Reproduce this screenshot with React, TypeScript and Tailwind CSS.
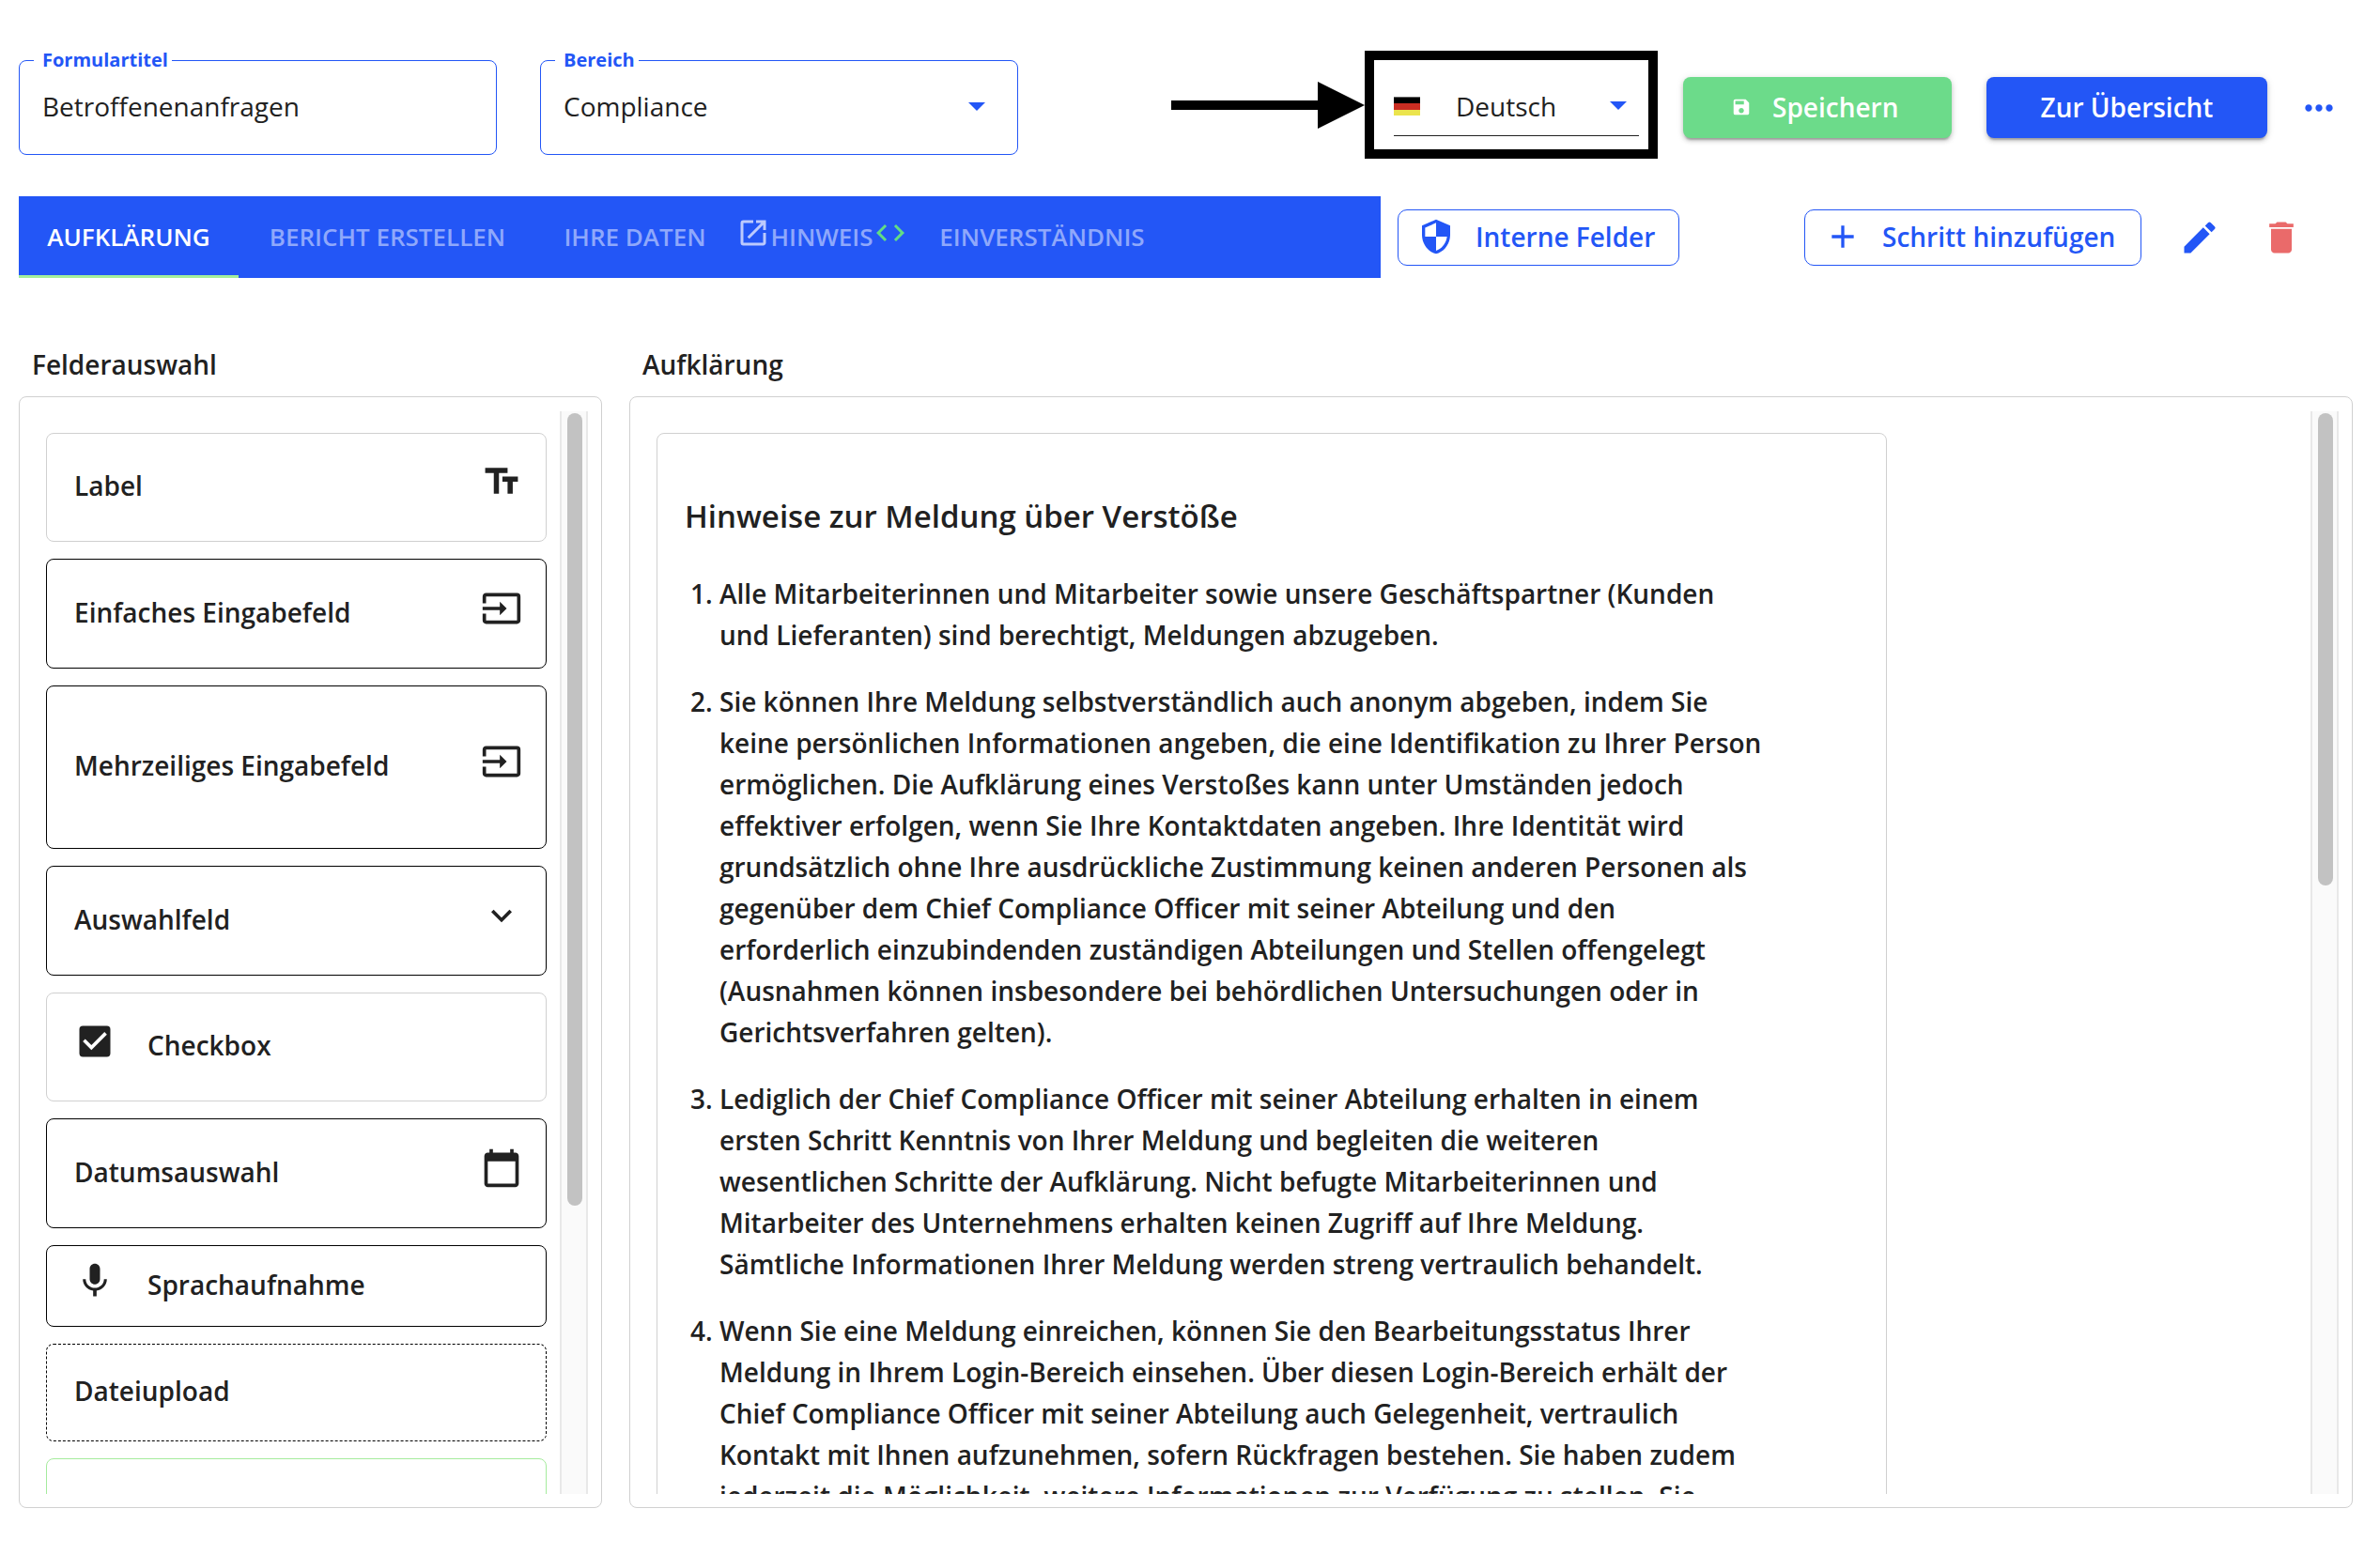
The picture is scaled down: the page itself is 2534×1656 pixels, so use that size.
import React, { useState } from "react";
import clsx from "clsx";
import {
  MdAdd,
  MdCalendarToday,
  MdCheckBox,
  MdCode,
  MdDelete,
  MdEdit,
  MdExpandMore,
  MdInput,
  MdMic,
  MdMoreHoriz,
  MdOpenInNew,
  MdSave,
  MdSecurity,
  MdTextFields,
} from "react-icons/md";

function Caret({ className }: { className?: string }) {
  return (
    <svg viewBox="0 0 18 9" className={clsx("pointer-events-none h-[9px] w-[18px] fill-[#2356f6]", className)}>
      <path d="M0 0h18L9 9z" />
    </svg>
  );
}

function GermanFlag() {
  return (
    <svg viewBox="0 0 28 20" className="h-5 w-7 shrink-0">
      <rect width="28" height="7" fill="#000000" />
      <rect width="28" height="1" fill="#666666" />
      <rect y="7" width="28" height="7" fill="#c92d22" />
      <rect y="14" width="28" height="6" fill="#ebe44d" />
    </svg>
  );
}

function OutlinedField({ id, label, children }: { id: string; label: string; children: React.ReactNode }) {
  return (
    <fieldset className="w-[509px] rounded-lg border border-[#2356f6] px-[15px] pb-3">
      <legend className="h-6 pl-[9px] pr-1 text-[20px] leading-6 font-bold text-[#2356f6]">
        <label htmlFor={id}>{label}</label>
      </legend>
      <div className="relative flex h-[76px] items-center pr-[19px] pb-0.5 pl-[9px]">{children}</div>
    </fieldset>
  );
}

function Tabs() {
  const [active, setActive] = useState("AUFKLÄRUNG");
  const tabs = [
    { name: "AUFKLÄRUNG", width: "w-[234px]" },
    { name: "BERICHT ERSTELLEN", width: "w-[317px]" },
    { name: "IHRE DATEN", width: "w-[210px]" },
    { name: "HINWEIS", width: "w-[188px]" },
    { name: "EINVERSTÄNDNIS", width: "w-[281px]" },
  ];
  return (
    <div role="tablist" className="flex h-[87px] min-w-0 flex-1 bg-[#2356f6]">
      {tabs.map(({ name, width }) => (
        <button
          key={name}
          role="tab"
          aria-selected={active === name}
          onClick={() => setActive(name)}
          className={clsx(
            "flex items-center justify-center border-b-3 pt-0.5 text-[26px] font-semibold whitespace-nowrap",
            width,
            active === name ? "border-[#a5ee9c] text-white" : "border-transparent text-[#8fa8fb]",
          )}
        >
          {name === "HINWEIS" ? (
            <>
              <MdOpenInNew className="mb-2 size-9 text-[#bccafd]" />
              {name}
              <MdCode className="mb-2 size-9 text-[#62dd84]" />
            </>
          ) : (
            name
          )}
        </button>
      ))}
    </div>
  );
}

function Panel({ thumb, children }: { thumb: string; children: React.ReactNode }) {
  return (
    <div className="flex min-h-0 flex-1 gap-3.5 rounded-lg border border-[#d0d0d0] pt-[15px] pr-3.5 pb-3.5 pl-7">
      <div className="min-w-0 flex-1 overflow-hidden pt-[23px]">{children}</div>
      <div className="w-[30px] border-x-2 border-[#e8e8e8] bg-[#fafafa] px-1.5 pt-0.5">
        <div className={clsx("w-4 rounded-full bg-[#c2c2c2]", thumb)} />
      </div>
    </div>
  );
}

const fields = [
  { label: "Label", trailing: MdTextFields, look: "h-[116px] border-[#d0d0d0]" },
  { label: "Einfaches Eingabefeld", trailing: MdInput, look: "h-[117px] border-black" },
  { label: "Mehrzeiliges Eingabefeld", trailing: MdInput, look: "h-[174px] border-black" },
  { label: "Auswahlfeld", trailing: MdExpandMore, look: "h-[117px] border-black" },
  { label: "Checkbox", leading: MdCheckBox, look: "h-[116px] border-[#d0d0d0]" },
  { label: "Datumsauswahl", trailing: MdCalendarToday, look: "h-[117px] border-black" },
  { label: "Sprachaufnahme", leading: MdMic, look: "h-[87px] border-black" },
  { label: "Dateiupload", look: "h-[104px] border-dashed border-black" },
  { label: "", look: "h-[117px] border-[#a5eb9d]" },
];

function FieldCard({ label, leading: Leading, trailing: Trailing, look }: (typeof fields)[number]) {
  return (
    <button
      className={clsx(
        "flex w-full shrink-0 items-center rounded-lg border pr-[25px] pb-1 pl-[29px] text-left text-[28px] font-semibold",
        look,
      )}
    >
      {Leading && <Leading className="mr-[34px] mb-2 size-11" />}
      <span className="flex-1">{label}</span>
      {Trailing && <Trailing className="mb-2 size-11" />}
    </button>
  );
}

const notes = [
  [
    "Alle Mitarbeiterinnen und Mitarbeiter sowie unsere Geschäftspartner (Kunden",
    "und Lieferanten) sind berechtigt, Meldungen abzugeben.",
  ],
  [
    "Sie können Ihre Meldung selbstverständlich auch anonym abgeben, indem Sie",
    "keine persönlichen Informationen angeben, die eine Identifikation zu Ihrer Person",
    "ermöglichen. Die Aufklärung eines Verstoßes kann unter Umständen jedoch",
    "effektiver erfolgen, wenn Sie Ihre Kontaktdaten angeben. Ihre Identität wird",
    "grundsätzlich ohne Ihre ausdrückliche Zustimmung keinen anderen Personen als",
    "gegenüber dem Chief Compliance Officer mit seiner Abteilung und den",
    "erforderlich einzubindenden zuständigen Abteilungen und Stellen offengelegt",
    "(Ausnahmen können insbesondere bei behördlichen Untersuchungen oder in",
    "Gerichtsverfahren gelten).",
  ],
  [
    "Lediglich der Chief Compliance Officer mit seiner Abteilung erhalten in einem",
    "ersten Schritt Kenntnis von Ihrer Meldung und begleiten die weiteren",
    "wesentlichen Schritte der Aufklärung. Nicht befugte Mitarbeiterinnen und",
    "Mitarbeiter des Unternehmens erhalten keinen Zugriff auf Ihre Meldung.",
    "Sämtliche Informationen Ihrer Meldung werden streng vertraulich behandelt.",
  ],
  [
    "Wenn Sie eine Meldung einreichen, können Sie den Bearbeitungsstatus Ihrer",
    "Meldung in Ihrem Login-Bereich einsehen. Über diesen Login-Bereich erhält der",
    "Chief Compliance Officer mit seiner Abteilung auch Gelegenheit, vertraulich",
    "Kontakt mit Ihnen aufzunehmen, sofern Rückfragen bestehen. Sie haben zudem",
    "jederzeit die Möglichkeit, weitere Informationen zur Verfügung zu stellen. Sie",
  ],
];

const raised =
  "shadow-[0_4px_2px_-2px_rgba(0,0,0,0.22),0_3px_5px_0_rgba(0,0,0,0.18),0_1px_9px_0_rgba(0,0,0,0.1)]";

export default function App() {
  return (
    <div className="flex h-screen flex-col overflow-hidden bg-white pb-[50px] font-['Open_Sans',sans-serif] text-[#212121]">
      <header className="flex items-start pt-[52px] pr-[43px] pl-5">
        <div className="flex gap-[46px]">
          <OutlinedField id="title" label="Formulartitel">
            <input
              id="title"
              defaultValue="Betroffenenanfragen"
              className="w-full bg-transparent text-[28px] outline-none"
            />
          </OutlinedField>
          <OutlinedField id="area" label="Bereich">
            <select id="area" className="w-full appearance-none bg-transparent text-[28px] outline-none">
              <option>Compliance</option>
            </select>
            <Caret className="absolute right-[19px]" />
          </OutlinedField>
        </div>

        <div className="mt-0.5 ml-auto flex items-center">
          <svg viewBox="0 0 206 50" className="h-[50px] w-[206px]">
            <path d="M0 20h156V0l50 25-50 25V30H0z" />
          </svg>
          <div className="h-[115px] w-[312px] border-10 border-black pt-[17px] pr-2.5 pl-[21px]">
            <div className="relative flex h-16 items-center border-b border-[#212121]">
              <GermanFlag />
              <select
                aria-label="Sprache"
                className="ml-[38px] flex-1 appearance-none bg-transparent text-[28px] outline-none"
              >
                <option>Deutsch</option>
              </select>
              <Caret className="absolute right-[13px]" />
            </div>
          </div>
          <div className="flex items-center pt-1.5">
            <button
              className={clsx(
                "ml-[27px] flex h-[65px] w-[286px] items-center gap-[22px] rounded-lg bg-[#6cdb8a] pb-0.5 pl-[51px] text-[28px] font-semibold text-white",
                raised,
              )}
            >
              <MdSave className="size-[22px]" />
              Speichern
            </button>
            <button
              className={clsx(
                "ml-[37px] h-[65px] w-[299px] rounded-lg bg-[#2356f6] pb-0.5 text-[28px] font-semibold text-white",
                raised,
              )}
            >
              Zur Übersicht
            </button>
            <button aria-label="Mehr" className="ml-[33px] text-[#2356f6]">
              <MdMoreHoriz className="size-11" />
            </button>
          </div>
        </div>
      </header>

      <nav className="mt-10 flex items-center pr-[83px] pl-5">
        <Tabs />
        <button className="ml-[18px] flex h-[60px] w-[300px] items-center gap-[22px] rounded-[10px] border border-[#2356f6] pb-0.5 pl-5 text-[28px] font-semibold text-[#2356f6]">
          <MdSecurity className="size-10" />
          Interne Felder
        </button>
        <button className="ml-[133px] flex h-[60px] w-[359px] items-center gap-[22px] rounded-[10px] border border-[#2356f6] pb-0.5 pl-5 text-[28px] font-semibold text-[#2356f6]">
          <MdAdd className="size-10" />
          Schritt hinzufügen
        </button>
        <button aria-label="Bearbeiten" className="ml-10 text-[#2356f6]">
          <MdEdit className="size-11" />
        </button>
        <button aria-label="Löschen" className="ml-[43px] text-[#ea6a6a]">
          <MdDelete className="size-11" />
        </button>
      </nav>

      <main className="mt-[74px] flex min-h-0 flex-1 gap-[29px] pr-[29px] pl-5">
        <section className="flex w-[621px] flex-col">
          <h2 className="mb-4 pl-3.5 text-[28px] leading-9 font-semibold">Felderauswahl</h2>
          <Panel thumb="h-[844px]">
            <div className="flex flex-col gap-[18px]">
              {fields.map((field) => (
                <FieldCard key={field.label} {...field} />
              ))}
            </div>
          </Panel>
        </section>

        <section className="flex min-w-0 flex-1 flex-col">
          <h2 className="mb-4 pl-3.5 text-[28px] leading-9 font-semibold">Aufklärung</h2>
          <Panel thumb="h-[503px]">
            <article className="w-3/4 rounded-lg border border-[#d0d0d0] px-[29px] pt-16">
              <h3 className="text-[33px] leading-12 font-semibold">Hinweise zur Meldung über Verstöße</h3>
              <ol className="mt-9 list-decimal space-y-[27px] pl-[37px] text-[28px] leading-11 font-semibold whitespace-nowrap">
                {notes.map((lines) => (
                  <li key={lines[0]}>
                    {lines.map((line) => (
                      <React.Fragment key={line}>
                        {line}
                        <br />
                      </React.Fragment>
                    ))}
                  </li>
                ))}
              </ol>
            </article>
          </Panel>
        </section>
      </main>
    </div>
  );
}
